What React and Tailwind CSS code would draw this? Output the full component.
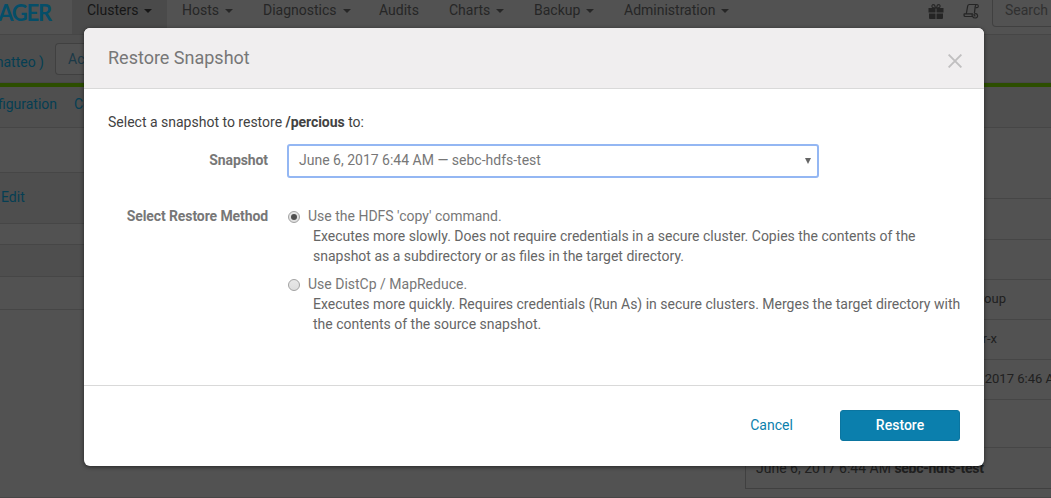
import React from "react";

const navItems = [
  { label: "Clusters", width: "w-[95px]", caret: true, active: true },
  { label: "Hosts", width: "w-[81px]", caret: true },
  { label: "Diagnostics", width: "w-[116px]", caret: true },
  { label: "Audits", width: "w-[70px]" },
  { label: "Charts", width: "w-[85px]", caret: true },
  { label: "Backup", width: "w-[90px]", caret: true },
  { label: "Administration", width: "w-[134px]", caret: true },
];

function Caret() {
  return <span className="mt-[2px] ml-[6px] border-x-4 border-t-4 border-x-transparent border-t-current" />;
}

function Gift() {
  return (
    <svg className="h-4 w-4" viewBox="0 0 16 16" fill="#252525">
      <path d="M.5 5h7v4.500h-7zM8.500 5h7v4.500h-7zM1 10.500h6.500V16H2a1 1 0 0 1-1-1zM8.500 10.500H15V15a1 1 0 0 1-1 1H8.500z" />
      <path d="M7.500 5 6.600 2.100Q4 .8 3.900 3T7.500 5zM8.500 5l.9-2.900Q12 .8 12.100 3T8.500 5z" fill="none" stroke="#252525" strokeWidth="1.100" />
    </svg>
  );
}

function Scroll() {
  return (
    <svg className="h-4 w-4" viewBox="0 0 16 16" fill="none" stroke="#252525" strokeWidth="1.200" strokeLinejoin="round">
      <path d="M3.300 10.800 4.700 2.800Q5 1.500 6.300 1.500H14q1.400.2 1.300 1.700-.1 1.400-1.500 1.500h-1.200" />
      <path d="M14 1.500q-1.500.2-1.700 1.700l-.9 7M1.300 10.800h8.200q-.9 1.300.1 2.700H2Q.5 12.900 1.300 10.800z" />
      <path d="M9.600 13.500q.8 1.600 2.800 1.500 2.400-.3 2.200-2.400-.2-1.700-1.700-2-2-.1-1.900 1.400.2 1.200 1.500.8" />
    </svg>
  );
}

function TopNav() {
  return (
    <header className="flex h-[35px] border-b border-[#464646] bg-[#525252]">
      <div className="flex w-[72px] shrink-0 justify-end overflow-hidden pt-px pr-[21px] font-['Lato'] text-[22px] leading-[24px] font-bold tracking-[-1.2px] text-[#054e69]">
        <span>MANAGER</span>
      </div>
      {navItems.map((n) => (
        <div
          key={n.label}
          className={`flex h-[34px] shrink-0 items-start pl-[15px] leading-5 ${n.width} ${n.active ? "bg-[#4a4a4a] text-[#161616]" : "text-[#262626]"}`}
        >
          <span className="flex h-5 items-center">
            {n.label}
            {n.caret && <Caret />}
          </span>
        </div>
      ))}
      <div className="ml-[185px] flex shrink-0 gap-[19px] pt-[3px]">
        <Gift />
        <Scroll />
      </div>
      <div className="ml-[13px] h-[27px] w-[120px] shrink-0 rounded-b border border-t-0 border-[#404040] pl-3 leading-5 text-[#303030]">Search</div>
    </header>
  );
}

function PageHeader() {
  return (
    <div className="flex h-12 border-b border-[#484848] bg-[#4e4e4e] pt-2">
      <div className="flex w-11 shrink-0 justify-end pt-[9px] leading-5 whitespace-nowrap text-[#053e53]">
        <span>(matteo )</span>
      </div>
      <div className="ml-[11px] h-8 w-[29px] shrink-0 overflow-hidden rounded-l border border-r-0 border-[#404040] bg-[#525252] pl-3 leading-[30px] text-[#1b3947]">Actions</div>
    </div>
  );
}

const leftRows = [
  { h: "h-[45px]", bg: "bg-[#525252]" },
  { h: "h-[51px]", bg: "bg-[#4e4e4e]", link: "Edit" },
  { h: "h-[21px]", bg: "bg-[#525252]" },
  { h: "h-[32px]", bg: "bg-[#4e4e4e]" },
  { h: "h-[33px]", bg: "bg-[#525252]" },
];

const detailRows = [
  { h: "h-[71px]", text: "" },
  { h: "h-[41px]", text: "" },
  { h: "h-[40px]", text: "" },
  { h: "h-[40px]", text: "supergroup", width: "w-[260px]" },
  { h: "h-[40px]", text: "rwxr-xr-x", width: "w-[251px]" },
];

function Page() {
  return (
    <div className="flex h-[498px] w-[1051px] flex-col border-b border-[#464646] bg-[#525252]">
      <TopNav />
      <PageHeader />
      <div className="h-1 shrink-0 bg-[#2c4e00]" />
      <nav className="flex h-[41px] shrink-0 border-b border-[#464646] bg-[#4f4f4f] pt-[7px] leading-5 text-[#053e53]">
        <div className="flex w-[57px] shrink-0 justify-end">
          <span>Configuration</span>
        </div>
        <span className="ml-[17px]">Commands</span>
      </nav>
      <div className="flex">
        <div className="w-[745px] shrink-0">
          {leftRows.map((r, i) => (
            <div key={i} className={`border-b border-[#464646] ${r.h} ${r.bg}`}>
              {r.link && <div className="pt-[14px] pl-px leading-5 text-[#053e53]">{r.link}</div>}
            </div>
          ))}
        </div>
        <div className="w-[306px] shrink-0 overflow-hidden text-[13px] text-[#202020]">
          <div className="border-l border-[#404040]">
            {detailRows.map((r, i) => (
              <div key={i} className={`flex items-center border-b border-[#464646] ${r.h}`}>
                {r.text && <span className={`text-right ${r.width}`}>{r.text}</span>}
              </div>
            ))}
            <div className="flex h-10 items-center border-b border-[#464646] whitespace-nowrap">
              <span className="ml-[194px]">June 6, 2017 6:46 AM</span>
            </div>
            <div className="h-[48px] border-b border-[#464646]" />
            <div className="flex h-[41px] items-center border-b border-[#404040] pl-[10px] text-sm whitespace-pre">
              June 6, 2017 6:44 AM <b className="tracking-[-0.28px]">sebc-hdfs-test</b>
            </div>
          </div>
        </div>
      </div>
    </div>
  );
}

function Radio({ checked }) {
  return (
    <span className="mt-[5px] flex h-3 w-3 shrink-0 items-center justify-center rounded-full border border-[#a2a2a2] bg-linear-to-b from-[#e8e8e8] to-[#dedede]">
      {checked && <span className="h-1.5 w-1.5 rounded-full bg-[#505050]" />}
    </span>
  );
}

function Method({ checked, title, children }) {
  return (
    <div className="flex">
      <Radio checked={checked} />
      <div className="ml-2 leading-5">
        <div className="text-[#777]">{title}</div>
        <div className="pl-[5px] whitespace-nowrap text-[#666]">{children}</div>
      </div>
    </div>
  );
}

function Dialog() {
  return (
    <section className="absolute top-7 left-[84px] flex h-[438px] w-[900px] flex-col overflow-hidden rounded-md bg-white shadow-[0_1px_4px_rgba(0,0,0,0.55)]">
      <div className="flex h-[61px] shrink-0 justify-between border-b border-[#d9d9d9] bg-[#f0eeef] pr-[22px] pl-6">
        <h1 className="pt-[18px] text-lg leading-6 text-[#777]">Restore Snapshot</h1>
        <svg className="mt-[26px] h-[14px] w-[14px]" viewBox="0 0 14 14" stroke="#c0bfc0" strokeWidth="1.900">
          <path d="M.6.6 13.400 13.400M13.400.6.6 13.400" />
        </svg>
      </div>
      <div className="flex h-[296px] shrink-0 flex-col pt-[23px] pl-6 leading-5">
        <p className="text-[#424242]">
          Select a snapshot to restore <b className="tracking-[-0.05px]">/percious</b> to:
        </p>
        <div className="mt-3 flex">
          <div className="w-[160px] shrink-0 pt-1.5 text-right font-bold tracking-[-0.1px] text-[#777]">Snapshot</div>
          <div className="ml-[19px] flex h-[34px] w-[532px] items-center justify-between rounded-[3px] border-2 border-[#94b7f3] pr-1.5 pb-0.5 pl-[10px] text-[#777]">
            <span>June 6, 2017 6:44 AM — sebc-hdfs-test</span>
            <span className="mt-[2px] border-x-[3px] border-t-[6px] border-x-transparent border-t-[#666]" />
          </div>
        </div>
        <div className="mt-7 flex">
          <div className="w-[160px] shrink-0 text-right font-bold tracking-[-0.1px] text-[#777]">Select Restore Method</div>
          <div className="ml-5 flex flex-col gap-2">
            <Method checked title="Use the HDFS 'copy' command.">
              Executes more slowly. Does not require credentials in a secure cluster. Copies the contents of the
              <br />
              snapshot as a subdirectory or as files in the target directory.
            </Method>
            <Method title="Use DistCp / MapReduce.">
              Executes more quickly. Requires credentials (Run As) in secure clusters. Merges the target directory with
              <br />
              the contents of the source snapshot.
            </Method>
          </div>
        </div>
      </div>
      <div className="flex h-[81px] items-start justify-end border-t border-[#d9d9d9] pt-6 pr-6">
        <button className="h-[31px] w-[137px] pb-0.5 text-[#0b7fad]">Cancel</button>
        <button className="h-[31px] w-[120px] rounded-[3px] border border-[#0b75a0] bg-[#0b7fad] pb-0.5 font-medium text-white">Restore</button>
      </div>
    </section>
  );
}

export default function App() {
  return (
    <div className="relative h-[498px] w-[1051px] overflow-hidden font-['Roboto',sans-serif] text-sm">
      <Page />
      <Dialog />
    </div>
  );
}
